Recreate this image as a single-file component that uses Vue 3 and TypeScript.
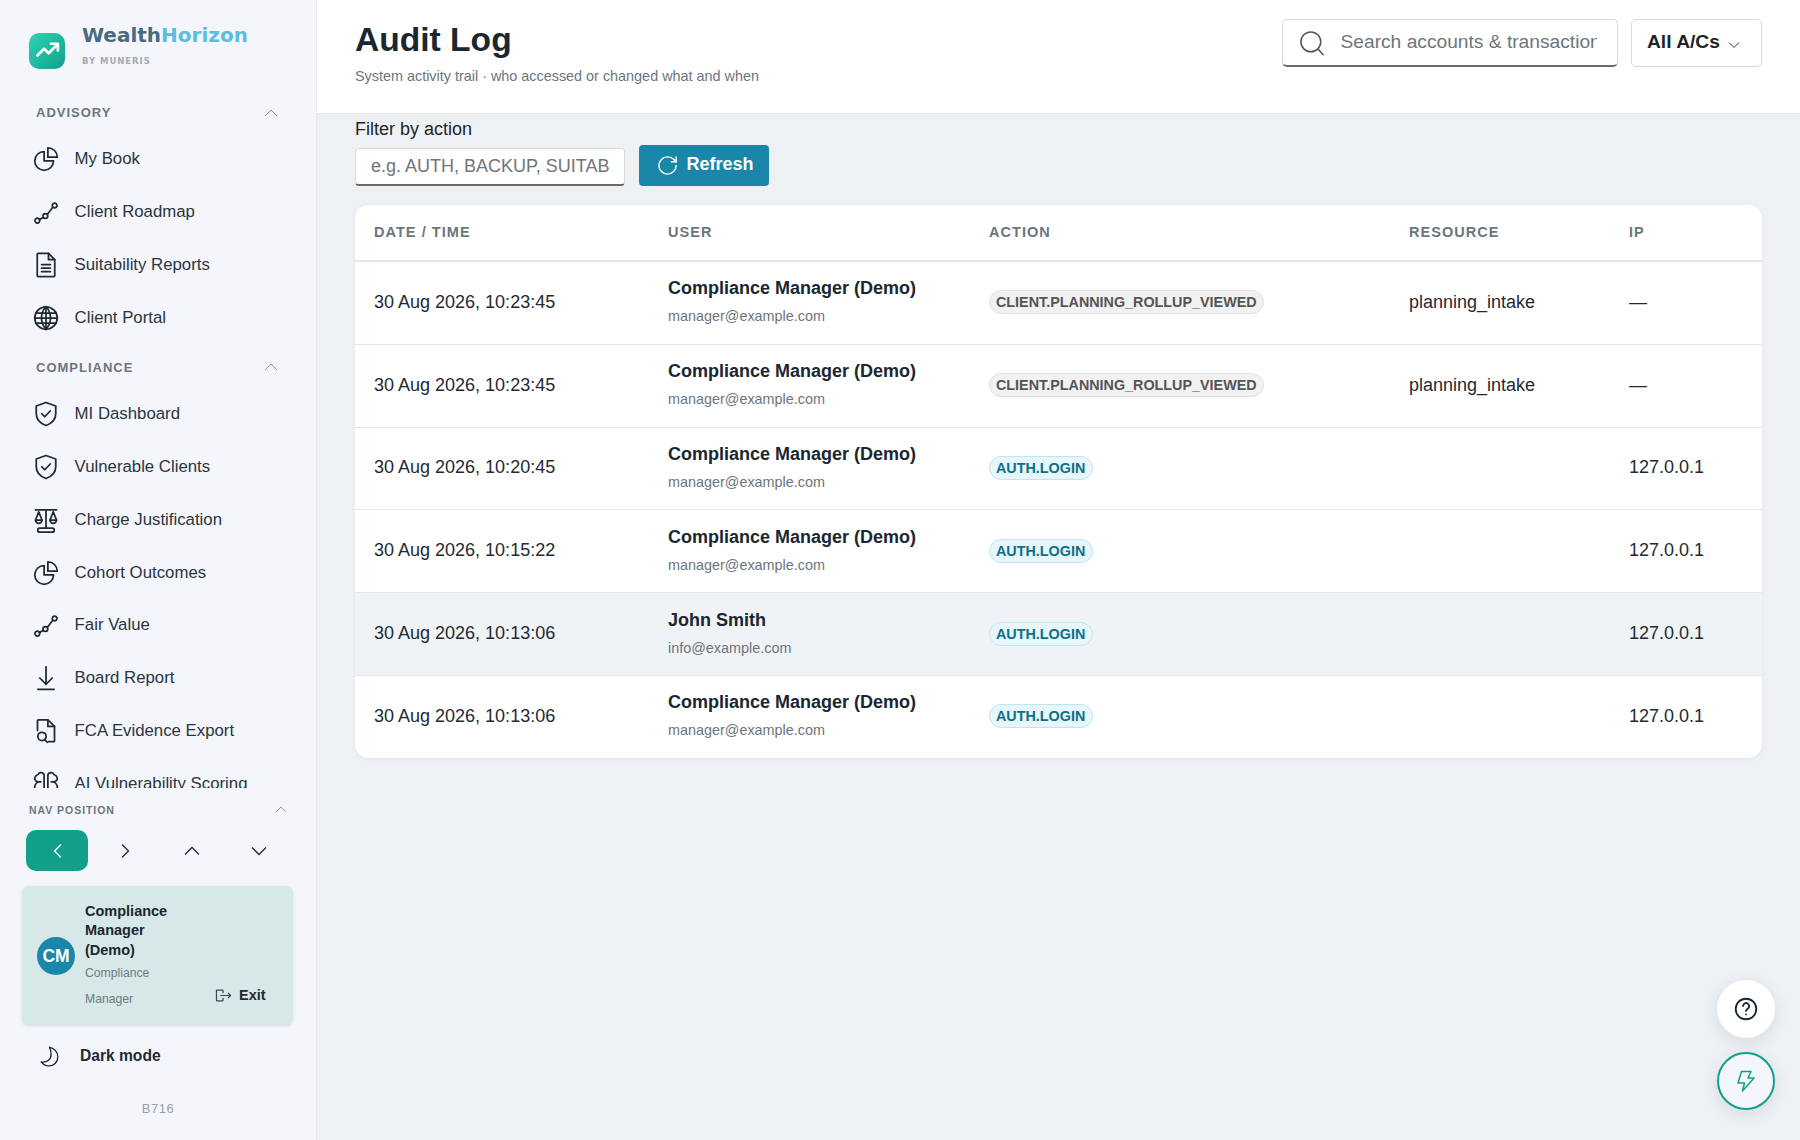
<script setup lang="ts">
interface NavItem { label: string; icon: string }
interface Row { time: string; user: string; email: string; action: string; kind: string; resource: string; ip: string; hover?: boolean }

const advisory: NavItem[] = [
  { label: 'My Book', icon: 'pie' },
  { label: 'Client Roadmap', icon: 'path' },
  { label: 'Suitability Reports', icon: 'doc' },
  { label: 'Client Portal', icon: 'globe' },
]
const compliance: NavItem[] = [
  { label: 'MI Dashboard', icon: 'shield' },
  { label: 'Vulnerable Clients', icon: 'shield' },
  { label: 'Charge Justification', icon: 'scale' },
  { label: 'Cohort Outcomes', icon: 'pie' },
  { label: 'Fair Value', icon: 'path' },
  { label: 'Board Report', icon: 'down' },
  { label: 'FCA Evidence Export', icon: 'docsearch' },
  { label: 'AI Vulnerability Scoring', icon: 'brain' },
]
const paths: Record<string, string[]> = {
  pie: ['M10.5 6a7.5 7.5 0 1 0 7.5 7.5h-7.5V6Z', 'M13.5 10.5H21A7.5 7.5 0 0 0 13.5 3v7.5Z'],
  path: ['M6.6 18.1l3.1-1.7', 'M13.3 13.6l3.800-5', 'M3.2 18.900a1.900 1.900 0 1 0 3.800 0a1.900 1.900 0 1 0-3.800 0', 'M9.600 15.200a1.900 1.900 0 1 0 3.800 0a1.900 1.900 0 1 0-3.800 0', 'M17 6.800a1.900 1.900 0 1 0 3.800 0a1.900 1.900 0 1 0-3.800 0'],
  doc: ['M14 2.700H5.700a.7.7 0 0 0-.7.7v17.200a.7.7 0 0 0 .7.7h12.600a.7.7 0 0 0 .7-.7V7.700L14 2.700Z', 'M14 2.700v5h5', 'M8.500 11.700h7', 'M8.500 14.500h7', 'M8.500 17.300h7'],
  globe: ['M12 3a9 9 0 1 0 0 18a9 9 0 1 0 0-18Z', 'M3 12h18', 'M3.9 8h16.200', 'M3.900 16h16.200', 'M12 3v18', 'M12 3c-4.800 5-4.800 13 0 18', 'M12 3c4.800 5 4.800 13 0 18'],
  shield: ['M12 2.800 4.200 5.600v6.100c0 4.400 3.200 7.700 7.800 9.500 4.600-1.800 7.800-5.100 7.800-9.500V5.600L12 2.800Z', 'M8.600 11.800l2.400 2.400 4.400-4.600'],
  scale: ['M3.500 3.800h17', 'M12 3.800v14.700', 'M7 18.500h10a1.600 1.600 0 0 1 0 3.200H7a1.600 1.600 0 0 1 0-3.200Z', 'M6.200 5.500 3.600 12a2.600 2.600 0 1 0 5.200 0L6.200 5.500Z', 'M17.800 5.500 15.200 12a2.600 2.600 0 1 0 5.200 0L17.800 5.500Z', 'M3.600 12h5.200', 'M15.200 12h5.200'],
  down: ['M12 3v14', 'M7 12l5 5 5-5', 'M5.500 21h13'],
  docsearch: ['M5.200 11.500V3.800a.8.8 0 0 1 .8-.8H13.500l5.300 5.300v11.400a.8.8 0 0 1-.8.8H14', 'M13.500 3v5.300h5.300', 'M5.500 16.300a3.300 3.300 0 1 0 6.600 0a3.300 3.300 0 1 0-6.600 0', 'M11 18.900l2 2.100'],
  brain: ['M10.500 21V5.200a2.500 2.500 0 0 0-4.800-.800C3.600 5 2.600 7 3.200 8.600c.4 1 1.400 1.600 2.800 1.600h1.800', 'M6 10.200C3.600 11 2.200 14 3.300 17', 'M13.500 21V5.200a2.500 2.500 0 0 1 4.800-.800c2.100.6 3.100 2.600 2.500 4.200-.4 1-1.400 1.600-2.800 1.600h-1.800', 'M18 10.200c2.400.8 3.800 3.800 2.700 6.800'],
}
const mgr = 'Compliance Manager (Demo)'
const mail = 'manager@example.com'
const rows: Row[] = [
  { time: '30 Aug 2026, 10:23:45', user: mgr, email: mail, action: 'CLIENT.PLANNING_ROLLUP_VIEWED', kind: 'grey', resource: 'planning_intake', ip: '—' },
  { time: '30 Aug 2026, 10:23:45', user: mgr, email: mail, action: 'CLIENT.PLANNING_ROLLUP_VIEWED', kind: 'grey', resource: 'planning_intake', ip: '—' },
  { time: '30 Aug 2026, 10:20:45', user: mgr, email: mail, action: 'AUTH.LOGIN', kind: 'blue', resource: '', ip: '127.0.0.1' },
  { time: '30 Aug 2026, 10:15:22', user: mgr, email: mail, action: 'AUTH.LOGIN', kind: 'blue', resource: '', ip: '127.0.0.1' },
  { time: '30 Aug 2026, 10:13:06', user: 'John Smith', email: 'info@example.com', action: 'AUTH.LOGIN', kind: 'blue', resource: '', ip: '127.0.0.1', hover: true },
  { time: '30 Aug 2026, 10:13:06', user: mgr, email: mail, action: 'AUTH.LOGIN', kind: 'blue', resource: '', ip: '127.0.0.1' },
]
</script>

<template>
  <div class="shell">
    <aside class="side">
      <div class="brand">
        <div class="logo">
          <svg viewBox="0 0 24 24" width="27" height="27" fill="none" stroke="#fff" stroke-width="2.400" stroke-linecap="round" stroke-linejoin="round">
            <path d="M3 16.500l6-6 4 4 8-8" /><path d="M15 6h6.200v6" />
          </svg>
        </div>
        <div class="brandtext">
          <div class="word"><span class="w1">Wealth</span><span class="w2">Horizon</span></div>
          <div class="by">BY MUNERIS</div>
        </div>
      </div>

      <nav class="nav">
        <div class="group">
          <span>ADVISORY</span>
          <svg class="chev" viewBox="0 0 14 8" width="14" height="8" fill="none" stroke="currentColor" stroke-width="1"><path d="M1 7l6-6 6 6" /></svg>
        </div>
        <a v-for="n in advisory" :key="n.label" class="item">
          <svg viewBox="0 0 24 24" width="30" height="30" fill="none" stroke="currentColor" stroke-width="1.400" stroke-linecap="round" stroke-linejoin="round"><path v-for="d in paths[n.icon]" :key="d" :d="d" /></svg>
          <span>{{ n.label }}</span>
        </a>
        <div class="group second">
          <span>COMPLIANCE</span>
          <svg class="chev" viewBox="0 0 14 8" width="14" height="8" fill="none" stroke="currentColor" stroke-width="1"><path d="M1 7l6-6 6 6" /></svg>
        </div>
        <a v-for="n in compliance" :key="n.label" class="item">
          <svg viewBox="0 0 24 24" width="30" height="30" fill="none" stroke="currentColor" stroke-width="1.400" stroke-linecap="round" stroke-linejoin="round"><path v-for="d in paths[n.icon]" :key="d" :d="d" /></svg>
          <span>{{ n.label }}</span>
        </a>
      </nav>

      <div class="foot">
        <div class="pos-head">
          <span>NAV POSITION</span>
          <svg viewBox="0 0 14 8" width="12" height="7" fill="none" stroke="currentColor" stroke-width="1"><path d="M1 7l6-6 6 6" /></svg>
        </div>
        <div class="pos">
          <button class="posbtn on"><svg viewBox="0 0 16 16" width="16" height="16" fill="none" stroke="currentColor" stroke-width="1.300"><path d="M11 1.500 4.500 8l6.500 6.500" /></svg></button>
          <button class="posbtn"><svg viewBox="0 0 16 16" width="16" height="16" fill="none" stroke="currentColor" stroke-width="1.300"><path d="M5 1.500 11.500 8 5 14.500" /></svg></button>
          <button class="posbtn"><svg viewBox="0 0 16 16" width="16" height="16" fill="none" stroke="currentColor" stroke-width="1.300"><path d="M1 11.500 8 4.500l7 7" /></svg></button>
          <button class="posbtn"><svg viewBox="0 0 16 16" width="16" height="16" fill="none" stroke="currentColor" stroke-width="1.300"><path d="M1 4.500l7 7 7-7" /></svg></button>
        </div>

        <div class="card">
          <div class="avatar">CM</div>
          <div class="who">
            <div class="name">Compliance<br />Manager<br />(Demo)</div>
            <div class="role">Compliance<br />Manager</div>
          </div>
          <button class="exit">
            <svg viewBox="0 0 18 16" width="17" height="15" fill="none" stroke="#3a4650" stroke-width="1.300" stroke-linecap="round" stroke-linejoin="round">
              <path d="M8.500 5V3a.8.8 0 0 0-.8-.8H2.300a.8.8 0 0 0-.8.8v10a.8.8 0 0 0 .8.8h5.400a.8.8 0 0 0 .8-.8v-2" /><path d="M6 8h10.500" /><path d="M14 5.500 16.500 8 14 10.500" />
            </svg>
            <span>Exit</span>
          </button>
        </div>

        <div class="dark">
          <svg viewBox="0 0 24 24" width="25" height="25" fill="none" stroke="currentColor" stroke-width="1.300" stroke-linecap="round" stroke-linejoin="round"><path d="M12 3c5 1.500 8 5 8 9.500 0 5-4 8.500-8.500 8.500-3 0-6-1.500-7.500-3.800 5.500 1 9.500-2.200 9.500-7.200 0-2.700-.5-5-1.500-7Z" /></svg>
          <span>Dark mode</span>
        </div>
        <div class="build">B716</div>
      </div>
    </aside>

    <div class="main">
      <header class="top">
        <div>
          <h1>Audit Log</h1>
          <p>System activity trail · who accessed or changed what and when</p>
        </div>
        <div class="tools">
          <label class="search">
            <svg viewBox="0 0 24 24" width="28" height="28" fill="none" stroke="#555" stroke-width="1.300" stroke-linecap="round"><circle cx="11" cy="11" r="8.500" /><path d="M17.200 17.200 21.500 22" /></svg>
            <input placeholder="Search accounts & transactions" />
          </label>
          <button class="acs">
            <span>All A/Cs</span>
            <svg viewBox="0 0 12 8" width="12" height="8" fill="none" stroke="#333" stroke-width="1"><path d="M1 1.500l5 5 5-5" /></svg>
          </button>
        </div>
      </header>

      <section class="content">
        <div class="filter-label">Filter by action</div>
        <div class="filter">
          <input class="fin" placeholder="e.g. AUTH, BACKUP, SUITABILITY" />
          <button class="refresh">
            <svg viewBox="0 0 24 24" width="23" height="23" fill="none" stroke="#fff" stroke-width="1.500" stroke-linecap="round" stroke-linejoin="round"><path d="M21 12a9 9 0 1 1-9-9c2.520 0 4.930 1 6.740 2.740L21 8" /><path d="M21 3v5h-5" /></svg>
            <span>Refresh</span>
          </button>
        </div>

        <div class="tablecard">
          <table>
            <colgroup>
              <col class="c1" /><col class="c2" /><col class="c3" /><col class="c4" /><col />
            </colgroup>
            <thead>
              <tr><th>DATE / TIME</th><th>USER</th><th>ACTION</th><th>RESOURCE</th><th>IP</th></tr>
            </thead>
            <tbody>
              <tr v-for="(r, i) in rows" :key="i" :class="{ hover: r.hover }">
                <td>{{ r.time }}</td>
                <td>
                  <div class="u">{{ r.user }}</div>
                  <div class="e">{{ r.email }}</div>
                </td>
                <td><span class="tag" :class="r.kind">{{ r.action }}</span></td>
                <td>{{ r.resource }}</td>
                <td>{{ r.ip }}</td>
              </tr>
            </tbody>
          </table>
        </div>
      </section>
    </div>

    <button class="fab help">
      <svg viewBox="0 0 24 24" width="26" height="26" fill="none" stroke="#1a2730" stroke-width="1.700" stroke-linecap="round" stroke-linejoin="round">
        <circle cx="12" cy="12" r="9.500" /><path d="M9.300 9.300a2.800 2.800 0 1 1 4.300 2.400c-.9.600-1.600 1.100-1.600 2.100" /><path d="M12 17h.01" />
      </svg>
    </button>
    <button class="fab bolt">
      <svg viewBox="0 0 24 24" width="24" height="24" fill="none" stroke="#12a08a" stroke-width="1.500" stroke-linecap="round" stroke-linejoin="round">
        <path d="M7.500 2.500H17l-3 6.500h6L8.500 22l2-8H4L7.500 2.500Z" />
      </svg>
    </button>
  </div>
</template>

<style>
html, body { margin: 0; padding: 0; }
</style>

<style scoped>
.shell {
  display: flex;
  height: 1140px;
  width: 1800px;
  overflow: hidden;
  position: relative;
  font-family: "Liberation Sans", Arial, sans-serif;
  color: #1a2730;
  background: #eef1f4;
}
.side {
  width: 316px;
  flex: none;
  height: 1140px;
  display: flex;
  flex-direction: column;
  background: #f4f6fb;
  border-right: 1px solid #e6e9ee;
  box-sizing: content-box;
}
.brand {
  display: flex;
  align-items: center;
  height: 99.200px;
  padding-left: 29px;
  gap: 17px;
  flex: none;
}
.logo {
  width: 36px;
  height: 36px;
  margin-top: 2px;
  border-radius: 10px;
  background: linear-gradient(135deg, #2dd4b4, #12a08f);
  display: flex;
  align-items: center;
  justify-content: center;
}
.brandtext { margin-top: -10px; }
.word { font-family: "DejaVu Sans", sans-serif; font-weight: 700; font-size: 20px; line-height: 26px; }
.w1 { color: #4a6a80; }
.w2 { color: #5bbde0; }
.by { font-family: "DejaVu Sans", sans-serif; font-weight: 700; font-size: 8.500px; letter-spacing: .95px; color: #a4abb3; margin-top: 7px; line-height: 12px; }
.nav {
  flex: 1;
  min-height: 0;
  overflow: hidden;
  padding-left: 24px;
  padding-right: 37px;
}
.group {
  display: flex;
  align-items: center;
  justify-content: space-between;
  height: 21px;
  padding: 0 1px 0 12px;
  font-size: 13px;
  font-weight: 700;
  letter-spacing: 1px;
  color: #6c757d;
  margin-top: 3px;
  margin-bottom: 9.600px;
}
.group.second { margin-top: 12.400px; margin-bottom: 10px; }
.chev { color: #8a9199; }
.item {
  display: flex;
  align-items: center;
  gap: 14.100px;
  height: 52.850px;
  padding-left: 9.500px;
  margin-left: -3px;
  font-size: 16.800px;
  color: #2a3540;
}
.item svg { flex: none; color: #1f2a33; }
.foot { flex: none; padding-top: 11px; padding-bottom: 23px; }
.pos-head {
  display: flex;
  align-items: center;
  justify-content: space-between;
  padding: 0 29px;
  height: 21px;
  font-size: 10.500px;
  font-weight: 700;
  letter-spacing: .95px;
  color: #6c757d;
}
.pos-head svg { color: #8a9199; }
.pos {
  display: grid;
  grid-template-columns: repeat(4, 62px);
  gap: 5px;
  padding-left: 26px;
  margin-top: 10px;
}
.posbtn {
  height: 41px;
  border: 0;
  background: transparent;
  border-radius: 10px;
  color: #1f2a33;
  display: flex;
  align-items: center;
  justify-content: center;
  padding: 0 0 0 2px;
}
.posbtn.on { background: #12a08a; color: #fff; }
.card {
  margin: 15px 23px 1px 22px;
  height: 139px;
  background: #d6e8e8;
  border-radius: 6px;
  box-shadow: 0 1px 3px rgba(60, 90, 100, .15);
  display: flex;
  align-items: center;
  padding-left: 15px;
  position: relative;
}
.avatar {
  width: 38px;
  height: 38px;
  margin-top: 1px;
  border-radius: 50%;
  background: #1a87aa;
  color: #fff;
  font-weight: 700;
  font-size: 17.500px;
  display: flex;
  align-items: center;
  justify-content: center;
  flex: none;
}
.who { margin-left: 10px; padding-top: 3px; }
.name { font-size: 14.500px; font-weight: 700; line-height: 19.300px; color: #1a2730; }
.role { font-size: 12.200px; line-height: 26px; color: #6f7b82; }
.exit {
  position: absolute;
  left: 193px;
  top: 101px;
  display: flex;
  align-items: center;
  gap: 7px;
  border: 0;
  background: transparent;
  padding: 0;
  font: 700 14.500px "Liberation Sans", Arial, sans-serif;
  color: #1f2a33;
}
.dark {
  display: flex;
  align-items: center;
  gap: 18px;
  height: 60px;
  padding-left: 37px;
  font-weight: 700;
  font-size: 15.600px;
  color: #1f2a33;
}
.build {
  text-align: center;
  font-size: 13px;
  letter-spacing: .5px;
  color: #9aa1a8;
  margin-top: 15px;
  line-height: 16px;
}
.main { flex: 1; min-width: 0; display: flex; flex-direction: column; }
.top {
  flex: none;
  height: 114px;
  box-sizing: border-box;
  background: #fff;
  border-bottom: 1px solid #e6e9ec;
  display: flex;
  justify-content: space-between;
  padding: 19px 38px 0;
}
h1 { margin: 0; font-size: 33.600px; line-height: 42px; font-weight: 700; color: #1a2730; }
.top p { margin: 6px 0 0; font-size: 14.400px; line-height: 18px; color: #6c757d; }
.tools { display: flex; gap: 13px; align-items: flex-start; flex: none; }
.search {
  width: 336px;
  height: 48px;
  box-sizing: border-box;
  border: 1px solid #d9d9d9;
  border-bottom: 2px solid #6a6a6a;
  border-radius: 5px;
  display: flex;
  align-items: center;
  padding-left: 15px;
  gap: 14.500px;
  background: #fff;
}
.search svg { flex: none; }
.search input {
  border: 0;
  outline: 0;
  width: 256px;
  padding: 0;
  font: 400 19.200px "Liberation Sans", Arial, sans-serif;
  margin-top: -1px;
  background: transparent;
}
.search input::placeholder { color: #6f757a; opacity: 1; }
.acs {
  width: 131px;
  height: 48px;
  box-sizing: border-box;
  border: 1px solid #d9d9d9;
  border-radius: 5px;
  background: #fff;
  display: flex;
  align-items: center;
  gap: 8px;
  padding: 0 0 2px 15px;
  font: 700 19.200px "Liberation Sans", Arial, sans-serif;
  color: #1f2326;
}
.acs svg { margin-top: 5px; }
.content { flex: 1; padding: 5px 38px 0 38px; min-height: 0; }
.filter-label { font-size: 18px; line-height: 20px; color: #1f2326; }
.filter { display: flex; gap: 14px; align-items: center; margin-top: 6px; height: 41px; }
.fin {
  width: 270px;
  height: 38px;
  margin-top: 3px;
  box-sizing: border-box;
  border: 1px solid #d9d9d9;
  border-bottom: 2px solid #6a6a6a;
  border-radius: 4px;
  padding: 0 15px;
  outline: 0;
  background: #fff;
  font: 400 18px "Liberation Sans", Arial, sans-serif;
}
.fin::placeholder { color: #6f757a; opacity: 1; }
.refresh {
  width: 130px;
  height: 41px;
  border: 0;
  border-radius: 4px;
  background: #1a87aa;
  color: #fff;
  display: flex;
  align-items: center;
  justify-content: center;
  gap: 7px;
  padding: 0 0 2px 2px;
  font: 700 18px "Liberation Sans", Arial, sans-serif;
}
.refresh svg { margin-top: 2px; }
.tablecard {
  margin-top: 19px;
  background: #fff;
  border-radius: 14px;
  overflow: hidden;
  box-shadow: 0 1px 4px rgba(40, 60, 80, .06);
  width: 1407px;
}
table { width: 100%; border-collapse: collapse; table-layout: fixed; }
.c1 { width: 294px; }
.c2 { width: 321px; }
.c3 { width: 420px; }
.c4 { width: 220px; }
th {
  height: 53.600px;
  text-align: left;
  padding: 0 0 1.400px 19px;
  font-size: 14.500px;
  font-weight: 700;
  letter-spacing: 1.050px;
  color: #6c757d;
  border-bottom: 2px solid #e4e7ea;
}
td {
  height: 80.800px;
  padding: 0 0 1px 19px;
  font-size: 18px;
  color: #1f2a33;
  border-bottom: 1px solid #e4e7ea;
}
tbody tr:last-child td { border-bottom: 0; }
tr.hover td { background: #f0f3f6; }
.u { font-weight: 700; font-size: 18px; line-height: 22px; color: #1a2730; }
.e { font-size: 14.400px; color: #6c757d; line-height: 18px; margin-top: 8px; margin-bottom: 2px; }
.tag {
  display: inline-block;
  font-size: 14.350px;
  font-weight: 700;
  line-height: 22px;
  padding: 0 6.500px 0 6px;
  border-radius: 12px;
  border: 1px solid;
}
.tag.grey { background: #f1f1f1; border-color: #e2e2e2; color: #555; }
.tag.blue { background: #e6f6fb; border-color: #bde6f2; color: #0f7088; }
.fab {
  position: absolute;
  right: 25px;
  width: 58px;
  height: 58px;
  border-radius: 50%;
  padding: 0;
  display: flex;
  align-items: center;
  justify-content: center;
  box-shadow: 0 4px 16px rgba(40, 60, 80, .12);
}
.help { top: 980px; background: #fff; border: 0; }
.bolt { top: 1052px; background: #f4f6fb; border: 2.500px solid #12a08a; }
</style>
